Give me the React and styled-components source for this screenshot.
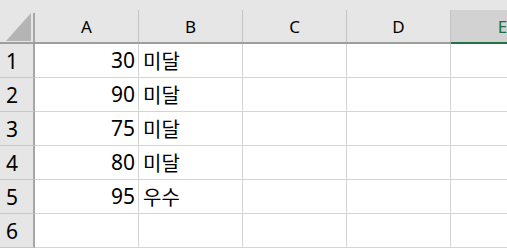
import React from 'react';
import styled, { createGlobalStyle } from 'styled-components';

const GlobalStyle = createGlobalStyle`
  html, body {
    margin: 0;
    padding: 0;
    background: #ffffff;
    overflow: hidden;
  }
`;

const Sheet = styled.div`
  width: 507px;
  height: 251px;
  overflow: hidden;
  font-family: "Noto Sans", "Noto Sans CJK KR", sans-serif;
  color: #000000;
  background: #ffffff;
`;

const HeaderRow = styled.div`
  display: flex;
  height: 42px;
  background: #e6e6e6;
  border-bottom: 2px solid #9e9e9e;
  width: max-content;
`;

const Corner = styled.div`
  display: flex;
  flex-direction: column;
  width: 35px;
  padding-top: 13px;
  box-sizing: border-box;
`;

const CornerBox = styled.div`
  flex: 1;
  display: flex;
  align-items: flex-end;
  justify-content: flex-end;
  border-right: 2px solid #a6a6a6;
  padding: 0 2px 1px 0;
`;

const ColHeader = styled.div`
  width: 104px;
  height: 32px;
  margin-top: 10px;
  box-sizing: border-box;
  display: flex;
  align-items: center;
  justify-content: center;
  border-right: 1px solid #c4c4c4;
  font-size: 17px;
  background: ${(p) => (p.$selected ? '#d2d2d2' : 'transparent')};
  color: ${(p) => (p.$selected ? '#1e6b41' : '#000000')};
  box-shadow: ${(p) => (p.$selected ? '0 2px 0 #217346' : 'none')};
`;

const Row = styled.div`
  display: flex;
  height: 34px;
  width: max-content;
`;

const RowHeader = styled.div`
  width: 35px;
  box-sizing: border-box;
  padding-left: 6px;
  display: flex;
  align-items: center;
  background: #e6e6e6;
  border-right: 2px solid #a6a6a6;
  border-bottom: 1px solid #c8c8c8;
  font-size: 21px;
`;

const Cell = styled.div`
  width: 104px;
  display: flex;
  align-items: center;
  justify-content: ${(p) => (p.$num ? 'flex-end' : 'flex-start')};
  padding: 0 ${(p) => (p.$num ? '3px' : '0')} 1px ${(p) => (p.$num ? '0' : '4px')};
  box-sizing: border-box;
  border-right: 1px solid #d4d4d4;
  border-bottom: 1px solid #d4d4d4;
  font-size: ${(p) => (p.$num ? '21px' : '20px')};
  white-space: nowrap;
`;

const columns = ['A', 'B', 'C', 'D', 'E'];

const rows = [
  { n: 1, score: 30, grade: '미달' },
  { n: 2, score: 90, grade: '미달' },
  { n: 3, score: 75, grade: '미달' },
  { n: 4, score: 80, grade: '미달' },
  { n: 5, score: 95, grade: '우수' },
  { n: 6, score: '', grade: '' },
];

const SelectAll = () => (
  <svg width="25" height="28" viewBox="0 0 25 28">
    <polygon points="25,0 25,28 0,28" fill="#b4b4b4" />
  </svg>
);

const App = () => (
  <Sheet>
    <GlobalStyle />
    <HeaderRow>
      <Corner>
        <CornerBox>
          <SelectAll />
        </CornerBox>
      </Corner>
      {columns.map((c) => (
        <ColHeader key={c} $selected={c === 'E'}>
          {c}
        </ColHeader>
      ))}
    </HeaderRow>
    {rows.map((r) => (
      <Row key={r.n}>
        <RowHeader>{r.n}</RowHeader>
        <Cell $num>{r.score}</Cell>
        <Cell>{r.grade}</Cell>
        <Cell />
        <Cell />
        <Cell />
      </Row>
    ))}
  </Sheet>
);

export default App;
